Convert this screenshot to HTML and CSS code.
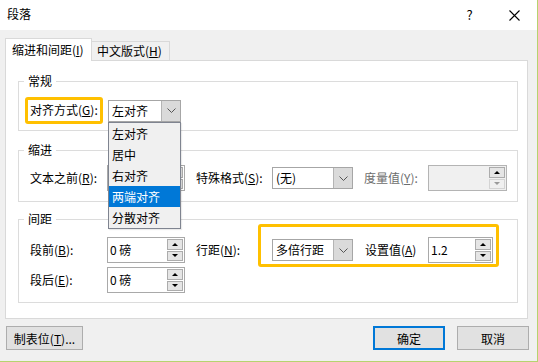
FILE: index.html
```html
<!DOCTYPE html>
<html lang="zh-CN">
<head>
    <meta charset="UTF-8">
    <title>段落</title>
    <link rel="stylesheet" href="styles.css">
</head>
<body>
    <div class="dialog">
        <!-- Title bar -->
        <div class="titlebar">
            <div class="title">段落</div>
            <div class="title-btn">?</div>
            <div class="title-btn">
                <svg width="11" height="11" viewBox="0 0 11 11"><path d="M0.5 0.5 L10.5 10.5 M10.5 0.5 L0.5 10.5" stroke="#000" stroke-width="1.1" fill="none"/></svg>
            </div>
        </div>

        <div class="dialog-body">
            <!-- Tabs -->
            <div class="tabs">
                <div class="tab active">缩进和间距(<u>I</u>)</div>
                <div class="tab">中文版式(<u>H</u>)</div>
            </div>

            <div class="panel">
                <!-- 常规 -->
                <fieldset class="group group-general">
                    <legend>常规</legend>
                    <div class="row row-general">
                        <div class="highlight hl-align">对齐方式(<u>G</u>):</div>
                        <div class="combo combo-align">
                            <span class="combo-value">左对齐</span>
                            <span class="combo-btn"><svg width="9" height="5" viewBox="0 0 9 5"><polyline points="0.5,0.5 4.5,4.5 8.5,0.5" stroke="#555" fill="none"/></svg></span>
                            <ul class="dropdown">
                                <li>左对齐</li>
                                <li>居中</li>
                                <li>右对齐</li>
                                <li class="selected">两端对齐</li>
                                <li>分散对齐</li>
                            </ul>
                        </div>
                    </div>
                </fieldset>

                <!-- 缩进 -->
                <fieldset class="group group-indent">
                    <legend>缩进</legend>
                    <div class="row">
                        <div class="label w77">文本之前(<u>R</u>):</div>
                        <div class="spin w78">
                            <span class="spin-value"></span>
                            <span class="spin-btns">
                                <span class="spin-btn"><i class="arrow-up"></i></span>
                                <span class="spin-btn"><i class="arrow-down"></i></span>
                            </span>
                        </div>
                        <div class="label label-special">特殊格式(<u>S</u>):</div>
                        <div class="combo w81">
                            <span class="combo-value">(无)</span>
                            <span class="combo-btn"><svg width="9" height="5" viewBox="0 0 9 5"><polyline points="0.5,0.5 4.5,4.5 8.5,0.5" stroke="#555" fill="none"/></svg></span>
                        </div>
                        <div class="label label-measure disabled">度量值(<u>Y</u>):</div>
                        <div class="spin spin-disabled w79">
                            <span class="spin-value"></span>
                            <span class="spin-btns">
                                <span class="spin-btn"><i class="arrow-up"></i></span>
                                <span class="spin-btn off"><i class="arrow-down"></i></span>
                            </span>
                        </div>
                    </div>
                </fieldset>

                <!-- 间距 -->
                <fieldset class="group group-spacing">
                    <legend>间距</legend>
                    <div class="row row-first">
                        <div class="label w77">段前(<u>B</u>):</div>
                        <div class="spin w78">
                            <span class="spin-value">0 磅</span>
                            <span class="spin-btns">
                                <span class="spin-btn"><i class="arrow-up"></i></span>
                                <span class="spin-btn"><i class="arrow-down"></i></span>
                            </span>
                        </div>
                        <div class="label label-line">行距(<u>N</u>):</div>
                        <div class="highlight hl-line">
                            <div class="combo w81">
                                <span class="combo-value">多倍行距</span>
                                <span class="combo-btn"><svg width="9" height="5" viewBox="0 0 9 5"><polyline points="0.5,0.5 4.5,4.5 8.5,0.5" stroke="#555" fill="none"/></svg></span>
                            </div>
                            <div class="label label-value">设置值(<u>A</u>)</div>
                            <div class="spin w65">
                                <span class="spin-value">1.2</span>
                                <span class="spin-btns">
                                    <span class="spin-btn"><i class="arrow-up"></i></span>
                                    <span class="spin-btn"><i class="arrow-down"></i></span>
                                </span>
                            </div>
                        </div>
                    </div>
                    <div class="row row-second">
                        <div class="label w77">段后(<u>E</u>):</div>
                        <div class="spin w78">
                            <span class="spin-value">0 磅</span>
                            <span class="spin-btns">
                                <span class="spin-btn"><i class="arrow-up"></i></span>
                                <span class="spin-btn"><i class="arrow-down"></i></span>
                            </span>
                        </div>
                    </div>
                </fieldset>
            </div>

            <!-- Footer buttons -->
            <div class="footer">
                <button class="btn btn-tabs">制表位(<u>T</u>)...</button>
                <div class="footer-right">
                    <button class="btn btn-default">确定</button>
                    <button class="btn">取消</button>
                </div>
            </div>
        </div>
    </div>
</body>
</html>
```

FILE: styles.css
```css
/* General Reset */
* {
    box-sizing: border-box;
    margin: 0;
    padding: 0;
}

body {
    font-family: "Noto Sans CJK SC", "Microsoft YaHei", sans-serif;
    font-size: 12px;
    line-height: 16px;
    color: #000;
    background: #fff;
}

u {
    text-underline-offset: 1px;
}

/* Dialog frame */
.dialog {
    width: 538px;
    height: 362px;
    background-color: #f0f0f0;
    border-right: 1px solid #b6d36e;
    border-bottom: 1px solid #b6d36e;
    display: flex;
    flex-direction: column;
}

.titlebar {
    height: 30px;
    background-color: #fff;
    display: flex;
    align-items: center;
    padding-left: 7px;
}

.title {
    flex: 1;
    padding-bottom: 2px;
}

.title-btn {
    width: 45px;
    height: 30px;
    display: flex;
    align-items: center;
    justify-content: center;
    font-size: 13px;
}

.dialog-body {
    flex: 1;
    padding: 8px 9px 0 5px;
}

/* Tabs */
.tabs {
    display: flex;
    align-items: flex-end;
    height: 22px;
}

.tab {
    height: 19px;
    width: 78px;
    padding-left: 5px;
    line-height: 18px;
    background-color: #f0f0f0;
    border: 1px solid #d9d9d9;
    border-left: none;
    border-bottom: none;
}

.tab.active {
    position: relative;
    z-index: 2;
    width: 87px;
    height: 23px;
    margin-bottom: -1px;
    padding-left: 6px;
    line-height: 22px;
    background-color: #fff;
    border-left: 1px solid #d9d9d9;
}

/* Tab panel */
.panel {
    position: relative;
    height: 259px;
    background-color: #fff;
    border: 1px solid #d9d9d9;
    padding: 12px 9px 0 12px;
}

.group {
    border: 1px solid #dcdcdc;
    min-width: 0;
}

.group legend {
    margin-left: 5px;
    padding: 0 4px;
    line-height: 16px;
}

.group-general {
    padding-bottom: 6px;
}

.group-indent {
    margin-top: 11px;
    padding-bottom: 10px;
}

.group-spacing {
    margin-top: 9px;
    padding-bottom: 9px;
}

.row {
    display: flex;
    align-items: center;
    height: 26px;
    margin-top: 7px;
    padding-left: 11px;
}

.row-general {
    height: 27px;
    margin-top: 8px;
    padding-left: 6px;
}

.row-first {
    margin-top: 10px;
}

.row-second {
    margin-top: 4px;
}

/* Annotation highlight */
.highlight {
    border: 3px solid #ffc000;
    border-radius: 3px;
}

.hl-align {
    width: 78px;
    height: 27px;
    padding-left: 2px;
    line-height: 20px;
}

.hl-line {
    display: flex;
    align-items: center;
    margin: -13px 0 -4px;
    padding: 10px 3px 1px 11px;
}

/* Labels */
.label {
    flex-shrink: 0;
}

.w77 { width: 77px; }
.w78 { width: 78px; }
.w79 { width: 79px; }
.w81 { width: 81px; }
.w65 { width: 65px; }

.label-special {
    width: 76px;
    margin-left: 11px;
}

.label-measure {
    width: 64px;
    margin-left: 11px;
}

.label-line {
    width: 62px;
    margin-left: 11px;
}

.label-value {
    width: 63px;
    margin-left: 12px;
}

.disabled {
    color: #6d6d6d;
}

/* Combo box */
.combo {
    position: relative;
    display: flex;
    height: 22px;
    border: 1px solid #a6a6a6;
    background-color: #fff;
    flex-shrink: 0;
}

.combo-align {
    width: 73px;
    margin-left: 5px;
}

.combo-value {
    flex: 1;
    padding-left: 3px;
    line-height: 20px;
}

.combo-btn {
    width: 19px;
    display: flex;
    align-items: center;
    justify-content: center;
    background-color: #dadada;
    border-left: 1px solid #b4b4b4;
}

/* Open dropdown list */
.dropdown {
    position: absolute;
    z-index: 5;
    top: 21px;
    left: -1px;
    width: 73px;
    list-style: none;
    background-color: #f0f0f0;
    border: 1px solid #7f8490;
    box-shadow: 1px 1px 1px rgba(0, 0, 0, 0.08);
}

.dropdown li {
    height: 21px;
    line-height: 21px;
    padding-left: 3px;
}

.dropdown li.selected {
    background-color: #0078d7;
    color: #fff;
}

/* Spin box */
.spin {
    display: flex;
    height: 26px;
    border: 1px solid #a9a9a9;
    background-color: #fff;
    flex-shrink: 0;
}

.spin-value {
    flex: 1;
    padding-left: 2px;
    line-height: 23px;
}

.spin-btns {
    width: 17px;
    display: flex;
    flex-direction: column;
    gap: 1px;
    padding: 1px 1px 1px 0;
}

.spin-btn {
    flex: 1;
    display: flex;
    align-items: center;
    justify-content: center;
    background-color: #e5e5e5;
    border: 1px solid #acacac;
}

.spin-btn.off {
    border-color: #d4d4d4;
    background-color: #f0f0f0;
}

.arrow-up,
.arrow-down {
    width: 0;
    height: 0;
    border-left: 3px solid transparent;
    border-right: 3px solid transparent;
}

.arrow-up {
    border-bottom: 3px solid #000;
}

.arrow-down {
    border-top: 3px solid #000;
}

.spin-btn.off .arrow-down {
    border-top-color: #9a9a9a;
}

.spin-disabled {
    background-color: #f0f0f0;
    border-color: #b4b4b4;
}

/* Footer */
.footer {
    display: flex;
    justify-content: space-between;
    margin-top: 7px;
    padding-left: 1px;
    margin-right: -1px;
}

.footer-right {
    display: flex;
    gap: 12px;
}

.btn {
    height: 24px;
    width: 72px;
    font-family: inherit;
    font-size: 12px;
    background-color: #e1e1e1;
    border: 1px solid #adadad;
    color: #000;
}

.btn-tabs {
    width: 77px;
}

.btn-default {
    border: 2px solid #0078d7;
}
```
